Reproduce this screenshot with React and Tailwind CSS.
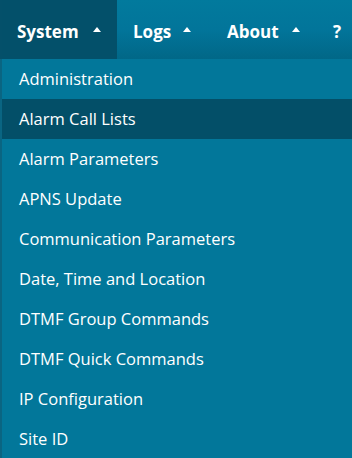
import React from "react";

const Tri = () => (
  <svg width="8" height="5" viewBox="0 0 8 5" className="block">
    <polygon points="4,0 8,5 0,5" fill="#ffffff" />
  </svg>
);

const items = [
  "Administration",
  "Alarm Call Lists",
  "Alarm Parameters",
  "APNS Update",
  "Communication Parameters",
  "Date, Time and Location",
  "DTMF Group Commands",
  "DTMF Quick Commands",
  "IP Configuration",
  "Site ID",
];

export default function App() {
  return (
    <div
      className="w-[352px] h-[458px] overflow-hidden bg-[#02779a] flex flex-col"
      style={{ fontFamily: '"Open Sans", sans-serif' }}
    >
      <div className="h-[59px] shrink-0 flex items-stretch bg-gradient-to-b from-[#027a9d] via-[#02759a] to-[#016787] text-white font-bold text-[17px]">
        <div className="w-[2px] bg-[#04506a]" />
        <div className="w-[115px] bg-[#03506a] flex items-center pl-[15px]">
          <span className="mt-[4px]">System</span>
          <span className="ml-[14px] mt-[-1px]"><Tri /></span>
        </div>
        <div className="w-[94px] flex items-center pl-[16px]">
          <span className="mt-[4px]">Logs</span>
          <span className="ml-[12px] mt-[-1px]"><Tri /></span>
        </div>
        <div className="w-[107px] flex items-center pl-[16px]">
          <span className="mt-[4px]">About</span>
          <span className="ml-[13px] mt-[-1px]"><Tri /></span>
        </div>
        <div className="flex items-center pl-[15px]">
          <span className="mt-[4px]">?</span>
        </div>
      </div>
      <div className="flex flex-1">
        <div className="w-[2px] bg-[#0a6582]" />
        <div className="flex-1 flex flex-col">
          {items.map((t, i) => (
            <div
              key={t}
              className={
                "h-[40px] shrink-0 flex items-center pl-[17px] pt-[1px] text-white text-[16.5px] " +
                (i === 1 ? "bg-[#034f68]" : "bg-[#02779a]")
              }
            >
              {t}
            </div>
          ))}
        </div>
      </div>
    </div>
  );
}
